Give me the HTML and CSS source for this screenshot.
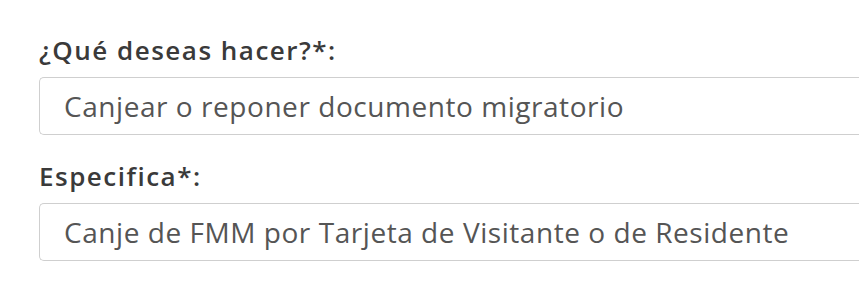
FILE: index.html
```html
<!DOCTYPE HTML>
<html>
<head>
  <meta name="viewport" content="width=device-width, initial-scale=1">
  <title>Trámite migratorio</title>
  <link rel="stylesheet" href="styles.css">
</head>
<body>
  <form class="tramite">
    <div class="field">
      <label class="field-label">¿Qué deseas hacer?*:</label>
      <div class="select">Canjear o reponer documento migratorio</div>
    </div>
    <div class="field">
      <label class="field-label">Especifica*:</label>
      <div class="select">Canje de FMM por Tarjeta de Visitante o de Residente</div>
    </div>
  </form>
</body>
</html>
```

FILE: styles.css
```css
body {
  margin: 0;
  background-color: #fff;
  font-family: "Open Sans", Arial, sans-serif;
}

.tramite {
  padding: 35px 0 0 39px;
}

.field {
  margin-bottom: 26px;
}

.field-label {
  display: block;
  font-size: 26px;
  line-height: 30px;
  font-weight: 600;
  letter-spacing: 1.5px;
  color: #3a3a3a;
  margin-bottom: 12px;
}

.select {
  box-sizing: border-box;
  width: 100%;
  height: 58px;
  padding: 0 24px;
  display: flex;
  align-items: center;
  font-size: 28px;
  letter-spacing: 0.55px;
  color: #555;
  border: 1px solid #cfcfcf;
  border-right: none;
  border-radius: 5px 0 0 5px;
}
```
